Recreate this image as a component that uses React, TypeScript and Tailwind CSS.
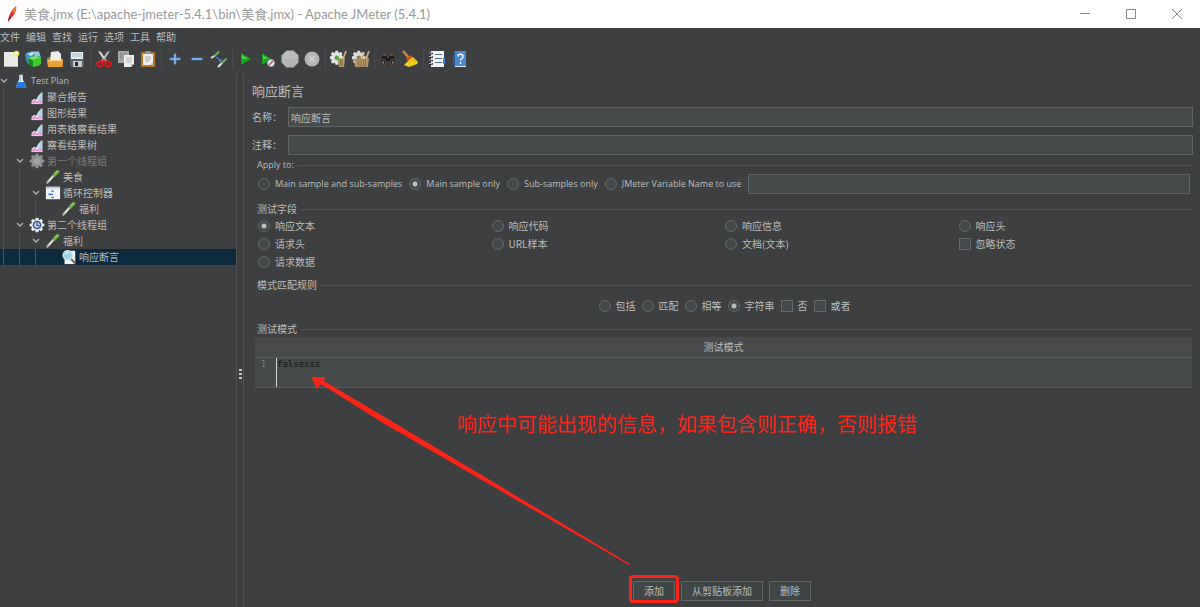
import { useState } from 'react';
import type { ReactNode } from 'react';
import { clsx } from 'clsx';

const menus = ['文件', '编辑', '查找', '运行', '选项', '工具', '帮助'];

const gearTeeth = [0, 45, 90, 135, 180, 225, 270, 315];

function Svg({ children, className = 'size-[18px]' }: { children: ReactNode; className?: string }) {
  return (
    <svg viewBox="0 0 18 18" className={clsx('block shrink-0', className)} aria-hidden="true">
      {children}
    </svg>
  );
}

function Gear({ fill, core }: { fill: string; core: ReactNode }) {
  return (
    <>
      {gearTeeth.map((deg) => (
        <rect key={deg} x="7.2" y="0.8" width="3.6" height="4" rx="1" fill={fill} transform={`rotate(${deg} 9 9)`} />
      ))}
      <circle cx="9" cy="9" r="6.4" fill={fill} />
      {core}
    </>
  );
}

const icons = {
  newFile: (
    <Svg>
      <path d="M2 2h14v15H2z" fill="#e9e9e6" />
      <path d="M2 16h14v1H2z" fill="#b9b9b6" />
      <circle cx="14.5" cy="3.5" r="2.8" fill="#e6ee6a" />
      <circle cx="14.5" cy="3.5" r="1.3" fill="#fbffc0" />
    </Svg>
  ),
  templates: (
    <Svg>
      <path d="M1 4l3-2 5-1 6 0 2 6-7 2-2 6-4-1-2-4z" fill="#3f93c2" />
      <path d="M3 4l5-2 3 1-4 3z" fill="#c3e6f0" />
      <path d="M10 2l5 0 1 4-5 0z" fill="#8fcbe2" />
      <path d="M4 8l5 2v7l-4-2z" fill="#14901a" />
      <path d="M9 10l8-3v7l-3 2-5 1z" fill="#3ccb28" />
      <path d="M4 8l7-2 6 1-8 3z" fill="#7fe052" />
    </Svg>
  ),
  open: (
    <Svg>
      <path d="M5 2l7-1 3 3v6H4z" fill="#eeeeec" />
      <path d="M1 8l3-1v3h11V8l2 1v8H2z" fill="#c87d14" />
      <path d="M1 10h16l-1 7H2z" fill="#e9a035" />
      <path d="M2 10h14v1.200H2z" fill="#fbd07e" />
    </Svg>
  ),
  save: (
    <Svg>
      <path d="M2 2h14v14l-1 1H3l-1-1z" fill="#55606a" />
      <path d="M3 2h12v7H3z" fill="#e6edf1" />
      <path d="M4 4h10M4 6h10" stroke="#9fb7c6" strokeWidth="1" />
      <path d="M5 11h9v6H5z" fill="#c8cccf" />
      <path d="M7 12h3v4H7z" fill="#23282c" />
    </Svg>
  ),
  cut: (
    <Svg>
      <path d="M3 1l3 1 6 9-2 1z" fill="#dfe2e3" />
      <path d="M15 1l-3 1-6 9 2 1z" fill="#b8bdbf" />
      <ellipse cx="5" cy="14" rx="2.6" ry="2.4" fill="none" stroke="#e01616" strokeWidth="2" />
      <ellipse cx="13" cy="14" rx="2.6" ry="2.4" fill="none" stroke="#e01616" strokeWidth="2" />
      <path d="M6.500 12l2.500-2 2.500 2" fill="none" stroke="#e01616" strokeWidth="1.600" />
    </Svg>
  ),
  copy: (
    <Svg>
      <path d="M1 1h11v12H1z" fill="#a6a8a7" />
      <path d="M3 4h7M3 6h3M3 8h3" stroke="#7e807f" />
      <path d="M7 5h10v9l-3 3H7z" fill="#eeeeec" />
      <path d="M9 8h6M9 10h6M9 12h5" stroke="#b4b6b5" />
      <path d="M17 14l-3 3v-3z" fill="#aeb0af" />
    </Svg>
  ),
  paste: (
    <Svg>
      <rect x="2" y="2" width="14" height="15" rx="1" fill="#b9781f" />
      <path d="M4 4h10v11H4z" fill="#f0f0ee" />
      <rect x="6" y="1" width="6" height="3" rx="1" fill="#8c8f8c" />
      <path d="M6 7h6M6 9h6M6 11h4" stroke="#a7a9a7" />
      <path d="M14 12v3h-3z" fill="#c6c8c6" />
    </Svg>
  ),
  expand: (
    <Svg>
      <path d="M9 3.500v11M3.500 9h11" stroke="#5d97de" strokeWidth="2.400" />
      <path d="M9 4.500v9M4.500 9h9" stroke="#a9cdf8" strokeWidth="0.800" />
    </Svg>
  ),
  collapse: (
    <Svg>
      <path d="M3.500 9h11" stroke="#5d97de" strokeWidth="2.400" />
      <path d="M4.500 9h9" stroke="#a9cdf8" strokeWidth="0.800" />
    </Svg>
  ),
  toggle: (
    <Svg>
      <path d="M1 8l4-2.500" stroke="#d8dad8" strokeWidth="2" />
      <path d="M5 5.500l4-4" stroke="#63b356" strokeWidth="2.200" />
      <path d="M8 17l4-4" stroke="#e4e6e4" strokeWidth="2" />
      <path d="M12 13l4.500-4.500" stroke="#63b356" strokeWidth="2.200" />
      <path d="M6 7l5 4" stroke="#3d7fd6" strokeWidth="1.400" />
      <path d="M11.500 8l.5 4-4-.5z" fill="#3d7fd6" />
    </Svg>
  ),
  start: (
    <Svg>
      <path d="M4 3l10 6-10 6z" fill="#17a51d" />
      <path d="M5 5l6 4H5z" fill="#4fd246" />
    </Svg>
  ),
  startNoPauses: (
    <Svg>
      <path d="M3 3l9 6-9 6z" fill="#17a51d" />
      <path d="M4 5l5 4H4z" fill="#4fd246" />
      <circle cx="12" cy="13" r="3.400" fill="#e8eef4" stroke="#8fb2da" />
      <path d="M10 15l4-4" stroke="#d8402f" strokeWidth="1.400" />
    </Svg>
  ),
  stop: (
    <Svg>
      <path d="M5.500 0.500h7l5 5v7l-5 5h-7l-5-5v-7z" fill="#b4b5b5" />
      <path d="M6 1.500h6l4.500 4.500v3h-15V6z" fill="#bcbdbd" />
    </Svg>
  ),
  shutdown: (
    <Svg>
      <circle cx="9" cy="9" r="7.500" fill="#b4b5b5" />
      <path d="M6.500 6.500l5 5M11.500 6.500l-5 5" stroke="#cfd0d0" strokeWidth="1.800" />
    </Svg>
  ),
  clear: (
    <Svg>
      <g transform="translate(-1 0) scale(0.860)">
        <Gear fill="#e2e4e2" core={<circle cx="9" cy="9" r="2.600" fill="#4f9d3d" />} />
      </g>
      <path d="M7 9l8-1-1 9H9z" fill="#b99a6b" />
      <path d="M10 9l1 7M12 9l0 7" stroke="#7d6238" strokeWidth="0.800" />
      <path d="M13 9l3-8" stroke="#c9ad80" strokeWidth="1.800" />
      <path d="M6 6l5 3-3 2z" fill="#64b64a" />
    </Svg>
  ),
  clearAll: (
    <Svg>
      <g transform="translate(-1 0) scale(0.860)">
        <Gear fill="#dcdeda" core={<circle cx="9" cy="9" r="2.600" fill="#8b7a55" />} />
      </g>
      <path d="M2 9l15-1-1 9H3z" fill="#b5966a" />
      <path d="M6 9l1 8M9 9v8M12 9l-1 8M14 9l-1 8" stroke="#7d6238" strokeWidth="0.800" />
      <path d="M10 9l2-7M14 9l3-8" stroke="#c9ad80" strokeWidth="1.800" />
    </Svg>
  ),
  search: (
    <Svg>
      <path d="M4 5h3l1 4v3H1z" fill="#191b1c" />
      <path d="M11 5h3l3 7h-7V9z" fill="#191b1c" />
      <path d="M7 8h4v3H7z" fill="#191b1c" />
      <path d="M4 5h3M11 5h3" stroke="#8b5a33" strokeWidth="1.400" />
      <circle cx="4" cy="12" r="3" fill="#202224" stroke="#6b4a38" />
      <circle cx="14" cy="12" r="3" fill="#202224" stroke="#6b4a38" />
      <circle cx="4" cy="12.500" r="1.200" fill="#6e8494" />
      <circle cx="14" cy="12.500" r="1.200" fill="#6e8494" />
    </Svg>
  ),
  broom: (
    <Svg>
      <path d="M2 1l6 7" stroke="#cf8a34" strokeWidth="2.200" />
      <path d="M5 8l5-3 2 3-5 3z" fill="#d4551d" />
      <path d="M12 7l5 5-1 2-8 3-5-2 4-4z" fill="#f2cf1f" />
      <path d="M11 10l2 4M9 11l0 5M13 9l2 4" stroke="#d8a912" strokeWidth="0.800" />
    </Svg>
  ),
  functions: (
    <Svg>
      <path d="M3 1h13v16H3z" fill="#f1f3f5" />
      <path d="M15 8h2v6h-2z" fill="#3e82e0" />
      <path d="M7 4.500h7M7 8.500h7M7 12.500h7" stroke="#54708e" strokeWidth="1.200" />
      <path d="M1 3.500h4M1 7h4M1 10.500h4M1 14h4" stroke="#26292b" strokeWidth="1.400" />
      <path d="M1 3h3M1 6.500h3M1 10h3M1 13.500h3" stroke="#c9ccce" strokeWidth="0.800" />
    </Svg>
  ),
  help: (
    <Svg>
      <path d="M3 1h13v16H3z" fill="#4a86d2" />
      <path d="M3 1h2v16H3z" fill="#27579c" />
      <path d="M5 16h11v1H5z" fill="#dfe8f2" />
      <path d="M8 6.500c0-3 5-3 5 0 0 2-2.500 2-2.500 4" fill="none" stroke="#f2f6fb" strokeWidth="1.600" />
      <circle cx="10.500" cy="13" r="1" fill="#f2f6fb" />
    </Svg>
  ),
};

const toolbarGroups: { label: string; icon: ReactNode }[][] = [
  [
    { label: '新建', icon: icons.newFile },
    { label: '模板', icon: icons.templates },
    { label: '打开', icon: icons.open },
    { label: '保存', icon: icons.save },
  ],
  [
    { label: '剪切', icon: icons.cut },
    { label: '复制', icon: icons.copy },
    { label: '粘贴', icon: icons.paste },
  ],
  [
    { label: '展开', icon: icons.expand },
    { label: '折叠', icon: icons.collapse },
    { label: '切换', icon: icons.toggle },
  ],
  [
    { label: '启动', icon: icons.start },
    { label: '不停顿启动', icon: icons.startNoPauses },
    { label: '停止', icon: icons.stop },
    { label: '关闭', icon: icons.shutdown },
  ],
  [
    { label: '清除', icon: icons.clear },
    { label: '清除全部', icon: icons.clearAll },
  ],
  [
    { label: '搜索', icon: icons.search },
    { label: '重置搜索', icon: icons.broom },
  ],
  [
    { label: '函数助手', icon: icons.functions },
    { label: '帮助', icon: icons.help },
  ],
];

const treeIcons = {
  plan: (
    <Svg className="size-4">
      <path d="M7 2h4v5l4 9H3l4-9z" fill="#e4ebf1" />
      <path d="M5.500 10h7l2.500 6.500H3z" fill="#1f7ae0" />
      <path d="M8.500 3v6" stroke="#9fb0bd" />
    </Svg>
  ),
  report: (
    <Svg className="size-4">
      <path d="M3 17v-4l3-2 2 1 3-5 3-3h1v13z" fill="#ece4f0" />
      <path d="M3 17v-3l3-2 3 2 6-3v6z" fill="#eb9bdc" />
      <path d="M10 12l4-8h1v8l-3 2z" fill="#a4d0f2" />
      <path d="M3 16h12v1H3z" fill="#f3c6ea" />
    </Svg>
  ),
  groupOff: (
    <Svg className="size-4">
      <Gear fill="#8f9192" core={<circle cx="9" cy="9" r="3.500" fill="#a3a5a6" />} />
    </Svg>
  ),
  group: (
    <Svg className="size-4">
      <Gear
        fill="#e9ebec"
        core={
          <>
            <circle cx="9" cy="9" r="4" fill="#c7d6ec" stroke="#34589c" strokeWidth="1.800" />
            <path d="M9 6.500V9.500h2.500" stroke="#23427e" strokeWidth="1.200" fill="none" />
          </>
        }
      />
    </Svg>
  ),
  sampler: (
    <Svg className="size-4">
      <path d="M2 16l8-9" stroke="#dfe2df" strokeWidth="2.400" />
      <path d="M2 16l2-2" stroke="#8e9290" strokeWidth="1.600" />
      <path d="M10.500 7l4-4" stroke="#6fae3c" strokeWidth="3.600" strokeLinecap="round" />
      <path d="M11 5l2.500-2.500" stroke="#a4d873" strokeWidth="1.200" strokeLinecap="round" />
    </Svg>
  ),
  controller: (
    <Svg className="size-4">
      <path d="M1 2h16v14H1z" fill="#f2f4f6" />
      <path d="M1 2h16v2H1z" fill="#c3cdd6" />
      <path d="M4 10.500h3" stroke="#2c6cc4" strokeWidth="1.800" />
      <path d="M7 7h3M7 10.500h2M7 14h3" stroke="#2c6cc4" strokeWidth="1.400" />
    </Svg>
  ),
  assertion: (
    <Svg className="size-4">
      <path d="M4 2h12v15H4z" fill="#f0f3f5" />
      <path d="M11 11l5 5" stroke="#7c5d3c" strokeWidth="2.200" />
      <circle cx="7.500" cy="7" r="5.200" fill="#9bd2e6" stroke="#d5dde2" strokeWidth="1.400" />
      <path d="M5 6c1-2 3-2 4-1.500" stroke="#e8f7fb" strokeWidth="1.200" fill="none" />
    </Svg>
  ),
};

type TreeNode = {
  label: string;
  depth: number;
  icon: ReactNode;
  open?: boolean;
  disabled?: boolean;
};

const treeNodes: TreeNode[] = [
  { label: 'Test Plan', depth: 0, icon: treeIcons.plan, open: true },
  { label: '聚合报告', depth: 1, icon: treeIcons.report },
  { label: '图形结果', depth: 1, icon: treeIcons.report },
  { label: '用表格察看结果', depth: 1, icon: treeIcons.report },
  { label: '察看结果树', depth: 1, icon: treeIcons.report },
  { label: '第一个线程组', depth: 1, icon: treeIcons.groupOff, open: true, disabled: true },
  { label: '美食', depth: 2, icon: treeIcons.sampler },
  { label: '循环控制器', depth: 2, icon: treeIcons.controller, open: true },
  { label: '福利', depth: 3, icon: treeIcons.sampler },
  { label: '第二个线程组', depth: 1, icon: treeIcons.group, open: true },
  { label: '福利', depth: 2, icon: treeIcons.sampler, open: true },
  { label: '响应断言', depth: 3, icon: treeIcons.assertion },
];

const applyOptions = ['Main sample and sub-samples', 'Main sample only', 'Sub-samples only', 'JMeter Variable Name to use'];
const fieldOptions = ['响应文本', '响应代码', '响应信息', '响应头', '请求头', 'URL样本', '文档(文本)'];
const ruleOptions = ['包括', '匹配', '相等', '字符串'];

const latinClass = "font-['Open_Sans',sans-serif] text-[9px] leading-4";
const inputClass = 'h-5 min-w-0 flex-1 border border-[#5f6464] bg-[#454949] px-0.5 outline-none';

function TitleBar() {
  return (
    <header className="flex h-7 shrink-0 items-center bg-white text-[#999999]">
      <svg viewBox="0 0 12 18" className="mr-1.5 ml-1.5 h-[18px] w-3 shrink-0" aria-hidden="true">
        <path d="M2 17c0-5 3-12 8-16 1 4-1 9-6 13z" fill="#d8352c" />
        <path d="M6 6c2-2 3-4 4-5 .6 3-.3 5-2 8z" fill="#ee7a2c" />
        <path d="M2 17c0-2 1-4 2-6l1 2z" fill="#6d2a6c" />
      </svg>
      <h1 className="flex-1 truncate font-['Lato','Noto_Sans_CJK_SC',sans-serif] text-[13px] leading-5">
        美食.jmx (E:\apache-jmeter-5.4.1\bin\美食.jmx) - Apache JMeter (5.4.1)
      </h1>
      <div className="flex">
        <button type="button" aria-label="最小化" className="flex w-[46px] justify-center">
          <svg viewBox="0 0 10 10" className="size-2.5" stroke="#8a8a8a"><path d="M0 4.500h10" /></svg>
        </button>
        <button type="button" aria-label="最大化" className="flex w-[46px] justify-center">
          <svg viewBox="0 0 10 10" className="size-2.5" stroke="#8a8a8a" fill="none"><path d="M.5.5h9v9h-9z" /></svg>
        </button>
        <button type="button" aria-label="关闭窗口" className="flex w-[46px] justify-center">
          <svg viewBox="0 0 10 10" className="size-2.5" stroke="#8a8a8a"><path d="M0 0l10 10M10 0L0 10" /></svg>
        </button>
      </div>
    </header>
  );
}

function Toolbar() {
  return (
    <div className="flex h-[27px] shrink-0 items-center pb-px">
      {toolbarGroups.map((group, index) => (
        <div key={group[0].label} className="flex items-center">
          {index > 0 && <span className="mx-0.5 h-5 w-px bg-[#4a4d4f]" />}
          {group.map((item) => (
            <button key={item.label} type="button" aria-label={item.label} className="flex w-[22px] justify-center">
              {item.icon}
            </button>
          ))}
        </div>
      ))}
    </div>
  );
}

function Tree() {
  const [selected, setSelected] = useState(treeNodes.length - 1);

  return (
    <nav className="w-[236px] shrink-0">
      <ul>
        {treeNodes.map((node, index) => (
          <li key={index}>
            <button
              type="button"
              onClick={() => setSelected(index)}
              className={clsx(
                'flex h-4 w-full items-center text-left',
                selected === index && 'bg-[#0d293e]',
                node.disabled && 'text-[#777a7b]',
              )}
            >
              {Array.from({ length: node.depth }, (_, level) => (
                <span key={level} className="h-full w-4 shrink-0 pl-[3px]">
                  <span className="block h-full w-px bg-[#4f5355]" />
                </span>
              ))}
              <span className="mr-[5px] w-2 shrink-0">
                {node.open && (
                  <svg viewBox="0 0 8 8" className="size-2" fill="none" stroke="#adb0b1" strokeWidth="1.400">
                    <path d="M1 2l3 3 3-3" />
                  </svg>
                )}
              </span>
              {node.icon}
              <span className={clsx('ml-0.5', node.depth === 0 && latinClass)}>{node.label}</span>
            </button>
          </li>
        ))}
      </ul>
    </nav>
  );
}

function Section({ title, children }: { title: string; children: ReactNode }) {
  return (
    <fieldset className="mr-2 ml-[13px] min-w-0">
      <legend className="flex h-4 w-full items-center gap-1 after:h-px after:flex-1 after:bg-[#525557]">{title}</legend>
      {children}
    </fieldset>
  );
}

function Radio({ name, label, defaultChecked }: { name: string; label: string; defaultChecked?: boolean }) {
  return (
    <label className="flex h-[18px] items-center gap-[5px] whitespace-nowrap">
      <input
        type="radio"
        name={name}
        defaultChecked={defaultChecked}
        className="size-3 shrink-0 appearance-none rounded-full border border-[#636868] bg-[#43494a] checked:bg-[radial-gradient(circle,#bcbebe_2px,#43494a_3px)]"
      />
      {label}
    </label>
  );
}

function Checkbox({ label }: { label: string }) {
  return (
    <label className="flex h-[18px] items-center gap-[5px] whitespace-nowrap">
      <input
        type="checkbox"
        className="size-3 shrink-0 appearance-none border border-[#636868] bg-[#43494a] checked:bg-[#bcbebe]"
      />
      {label}
    </label>
  );
}

const buttonClass = 'h-5 border border-[#5f6464] bg-[#404546] px-2.5 leading-none';

function AssertionPanel() {
  return (
    <main className="relative flex min-w-0 flex-1 flex-col pt-2 pb-1.5">
      <h2 className="ml-2 text-[13px] leading-5">响应断言</h2>
      <div className="mt-1.5 mr-[7px] ml-2 flex items-center">
        <label htmlFor="name" className="w-9">名称：</label>
        <input id="name" defaultValue="响应断言" className={inputClass} />
      </div>
      <div className="mt-2 mr-[7px] mb-0.5 ml-2 flex items-center">
        <label htmlFor="comment" className="w-9">注释：</label>
        <input id="comment" className={inputClass} />
      </div>

      <div className={latinClass}>
        <Section title="Apply to:">
          <div className="flex h-[22px] items-center gap-[7px] pr-0.5 pl-px">
            {applyOptions.map((option, index) => (
              <Radio key={option} name="apply" label={option} defaultChecked={index === 1} />
            ))}
            <input aria-label="JMeter Variable Name" className={inputClass} />
          </div>
        </Section>
      </div>

      <div className="mt-1.5">
        <Section title="测试字段">
          <div className="grid grid-cols-4 pl-px">
            {fieldOptions.map((option, index) => (
              <Radio key={option} name="field" label={option} defaultChecked={index === 0} />
            ))}
            <Checkbox label="忽略状态" />
            <Radio name="field" label="请求数据" />
          </div>
        </Section>
      </div>

      <div className="mt-1.5">
        <Section title="模式匹配规则">
          <div className="flex justify-center gap-1.5 pt-1">
            {ruleOptions.map((option, index) => (
              <Radio key={option} name="rule" label={option} defaultChecked={index === 3} />
            ))}
            <Checkbox label="否" />
            <Checkbox label="或者" />
          </div>
        </Section>
      </div>

      <div className="mt-1.5">
        <Section title="测试模式">
          <div className="-ml-0.5">
            <table className="w-full border-collapse">
              <thead>
                <tr className="h-5 border-b border-[#545959] bg-[#47494a]">
                  <th colSpan={2} className="p-0 font-normal">测试模式</th>
                </tr>
              </thead>
              <tbody>
                <tr className="h-[30px] border-b border-[#545959] bg-[#454949] align-top font-['DejaVu_Sans_Mono','Liberation_Mono',monospace] text-[9px] leading-3">
                  <td className="w-[21px] p-0 pr-1 text-center text-[#75807e]">1</td>
                  <td className="p-0">
                    <textarea
                      aria-label="测试模式"
                      defaultValue="falsesss"
                      className="block h-[29px] w-full resize-none border-l border-[#d4d6d6] text-[#131515] outline-none"
                    />
                  </td>
                </tr>
              </tbody>
            </table>
          </div>
        </Section>
      </div>

      <div className="mt-auto flex justify-center gap-1.5">
        <div className="relative">
          <button type="button" className={buttonClass}>添加</button>
          <span className="pointer-events-none absolute -inset-x-1 -top-1.5 -bottom-0.5 rounded-sm border-3 border-[#fb2418]" />
        </div>
        <button type="button" className={buttonClass}>从剪贴板添加</button>
        <button type="button" className={buttonClass}>删除</button>
      </div>

      <svg viewBox="0 0 320 190" className="pointer-events-none absolute top-[303px] left-[66px] h-[190px] w-80" aria-hidden="true">
        <path d="M1 1L15 1 14 5 78 43 320 188 319 189 73 47 11 8 7 13z" fill="#fb2418" />
      </svg>
      <p className="pointer-events-none absolute top-[336px] left-[213px] text-[20px] leading-[30px] whitespace-nowrap text-[#fb2418]">
        响应中可能出现的信息，如果包含则正确，否则报错
      </p>
    </main>
  );
}

export default function App() {
  return (
    <div className="flex min-h-screen flex-col bg-[#3d3f41] font-['Noto_Sans_CJK_SC',sans-serif] text-[10px] leading-4 text-[#bbbdbd]">
      <TitleBar />
      <div className="flex h-[18px] shrink-0 items-center gap-1.5" role="menubar">
        {menus.map((menu) => (
          <button key={menu} type="button" role="menuitem">{menu}</button>
        ))}
      </div>
      <Toolbar />
      <div className="flex flex-1">
        <Tree />
        <div className="flex w-2 shrink-0 items-center justify-center border-x border-[#4d5052] pt-[68px]">
          <svg viewBox="0 0 3 11" className="h-[11px] w-[3px]" fill="#c4c6c6" aria-hidden="true">
            <path d="M0 0h3v2H0zM0 4h3v2H0zM0 8h3v2H0z" />
          </svg>
        </div>
        <AssertionPanel />
      </div>
    </div>
  );
}
